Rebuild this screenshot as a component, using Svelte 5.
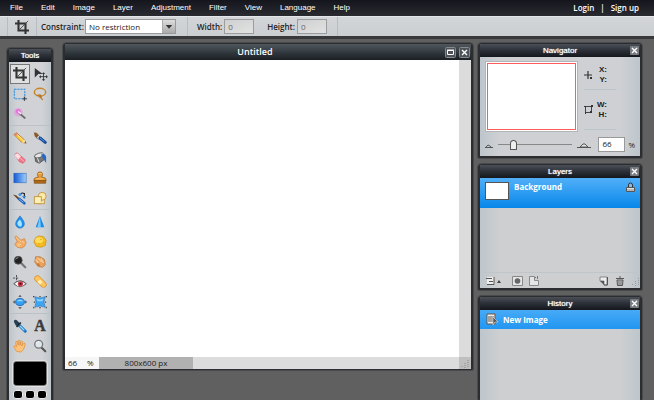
<script>
	const menus = ['File', 'Edit', 'Image', 'Layer', 'Adjustment', 'Filter', 'View', 'Language', 'Help'];

	const crop =
		'<path d="M4 0v12h12M0 4h12v12" fill="none" stroke="#333" stroke-width="2.4"/><path d="M5 11L15 1" stroke="#444"/>';
	const hand =
		'<path d="M4 14L1 9q0-2 2-1l1 1L3 4q0-2 2-1l1 4V2q1-2 2 0v5l1-4q1-2 2 0l-1 5 2-3q2-1 2 1l-2 6-3 3z" fill="#ffc27a" stroke="#d98a35" stroke-width=".8"/>';

	// null marks an empty cell
	const toolGroups = [
		[
			{ name: 'Crop', art: crop },
			{
				name: 'Move',
				art: '<path d="M2 1l9 7H6l-4 4z" fill="#333"/><path d="M12 8v7M8 11h8" stroke="#333"/><path d="M12 6l2 2h-4zM12 16l2-2h-4zM7 11l2-2v4zM17 11l-2-2v4z" fill="#333"/>'
			},
			{
				name: 'Marquee',
				art: '<rect x="1.500" y="2.500" width="12" height="11" fill="none" stroke="#2b8fe0" stroke-width="1.2" stroke-dasharray="2.500 1"/><path d="M13 11v5M11 13.500h5" stroke="#333"/>'
			},
			{
				name: 'Lasso',
				art: '<ellipse cx="8" cy="6" rx="6.500" ry="4.500" fill="none" stroke="#c98429" stroke-width="1.600"/><path d="M5 10q3-2 4 0t-2 1q3 1 4 4" fill="none" stroke="#b87324" stroke-width="1.300"/>'
			},
			{
				name: 'Wand',
				art: '<circle cx="6" cy="6" r="5" fill="#ee76e0" opacity=".4"/><circle cx="6" cy="5" r="2.800" fill="#ec62dc" opacity=".8"/><path d="M7 7l7 6" stroke="#666" stroke-width="2.200"/><path d="M6 5l3 3" stroke="#fff" stroke-width="1.500"/>'
			},
			null
		],
		[
			{
				name: 'Pencil',
				art: '<path d="M1 4l3-2 9 8 2 4-5-1z" fill="#ffc83d" stroke="#a76b16" stroke-width=".8"/><path d="M1 4l3-2 2 2-3 2z" fill="#e98379"/><path d="M10 13l3-3 2 4z" fill="#f8e0b0"/><path d="M13 13l2 1-1-2z" fill="#222"/><path d="M5 4l7 7" stroke="#fff0a5"/>'
			},
			{
				name: 'Brush',
				art: '<path d="M1 2q3-1 5 2l2 3-3 2-3-3z" fill="#8a5a2a"/><path d="M6 5l3 3-2 2-3-2z" fill="#d9d9d9" stroke="#555" stroke-width=".5"/><path d="M8 8l6 5" stroke="#174b98" stroke-width="3.500" stroke-linecap="round"/><path d="M8 8l5 4" stroke="#55a3f0"/>'
			},
			{
				name: 'Eraser',
				art: '<path d="M2 4q2-3 4-1l8 7q0 3-3 4l-4-2z" fill="#f0788b" stroke="#c95b6e" stroke-width=".7"/><path d="M2 5q1-3 4-2l3 3-3 4z" fill="#ffdce0"/><path d="M8 8l5 4" stroke="#fbb4be"/>'
			},
			{
				name: 'Paint bucket',
				art: '<path d="M2 6l8-3 4 6-7 5-4-2z" fill="#777" stroke="#333" stroke-width=".7"/><ellipse cx="7" cy="5" rx="5.500" ry="2.500" transform="rotate(-17 7 5)" fill="#e6e6e6" stroke="#444" stroke-width=".8"/><path d="M9 4q5-2 6 3v7l-3-5z" fill="#2467c6"/><path d="M5 8l2 5" stroke="#eee"/>'
			},
			{
				name: 'Gradient',
				art: '<defs><linearGradient id="blue"><stop stop-color="#1558d4"/><stop offset="1" stop-color="#9bd0fa"/></linearGradient></defs><rect x="1" y="2.500" width="14" height="11" fill="url(#blue)" stroke="#2c65b8" stroke-width=".6"/>'
			},
			{
				name: 'Clone stamp',
				art: '<path d="M6 7l-1-3q0-3 3-3t3 3l-1 3 4 1q1 1 1 3H1q0-2 1-3z" fill="#e89a30" stroke="#8e5310" stroke-width=".8"/><path d="M1.500 11h13v3h-13z" fill="#b46c19" stroke="#744009" stroke-width=".7"/><path d="M6 3l4 0M3 9h9" stroke="#ffd27e"/>'
			},
			{
				name: 'Color replace',
				art: '<path d="M0 4l4 1 4 4-2 1z" fill="#704318"/><path d="M7 9l6 5" stroke="#205fb4" stroke-width="3" stroke-linecap="round"/><path d="M7 9l5 4" stroke="#8cc5f8"/><path d="M8 5q1-4 5-2v3" fill="none" stroke="#222" stroke-width="1.300"/><path d="M10 6h5l-2 3z" fill="#287bd0"/><circle cx="8" cy="4" r="1.800" fill="#4099e8"/>'
			},
			{
				name: 'Drawing',
				art: '<circle cx="10.500" cy="6" r="4.500" fill="#ffe9a8" stroke="#bc943d"/><rect x="1.500" y="6.500" width="8" height="8" fill="#fff0b8" stroke="#bc943d"/><path d="M5 14.500h8v-4" fill="#ffe9a8" stroke="#bc943d"/>'
			}
		],
		[
			{
				name: 'Blur',
				art: '<path d="M8 1q5 6 5 9a5 5 0 0 1-10 0q0-3 5-9z" fill="#1d8fec" stroke="#1768bd" stroke-width=".6"/><path d="M8 5q3 4 2 7t-4 0 2-7z" fill="#a5e4ff"/>'
			},
			{
				name: 'Sharpen',
				art: '<path d="M8 1l5 13H3z" fill="#198be9"/><path d="M8 1l1 13H5z" fill="#74c9ff"/>'
			},
			{
				name: 'Smudge',
				art: '<path d="M2 2l2-1 5 5 4-2 2 5-2 4-3 2-5-1-3-3 1-2 2-1z" fill="#f3ac65" stroke="#c87b36" stroke-width=".7"/><path d="M3 2l6 6M5 10l4 1M5 12l3 1M10 7l3 2" stroke="#ffd5a4"/>'
			},
			{
				name: 'Sponge',
				art: '<path d="M3 3l4-2 5 1 3 4-1 6-5 2-5-1-3-5z" fill="#f5bd20" stroke="#c88b0b" stroke-width=".8"/><ellipse cx="7" cy="6" rx="4.500" ry="3.500" fill="#ffdc59"/><path d="M8 5h2M6 10h2M11 9h2" stroke="#e0a51a"/>'
			},
			{
				name: 'Dodge',
				art: '<path d="M9 9l5 5" stroke="#777" stroke-width="2.500" stroke-linecap="round"/><circle cx="6" cy="6" r="4.500" fill="#222" stroke="#555"/><path d="M3 5q1-2 3-2" fill="none" stroke="#aaa"/>'
			},
			{
				name: 'Burn',
				art: '<path d="M3 2l5 0 5 3 1 6-3 3-5-1-4-5z" fill="#e9a361" stroke="#b66e30" stroke-width=".8"/><path d="M5 3l5 5M3 5l4 5M9 4l3 5" stroke="#ffd09b" stroke-width="1.200"/><circle cx="6" cy="11" r="1.800" fill="#c87b3d"/>'
			},
			{
				name: 'Red eye',
				art: '<path d="M1 10q7-7 14 0-7 7-14 0z" fill="#fff" stroke="#555" stroke-width="1.200"/><circle cx="8.500" cy="10" r="3" fill="#cf3145"/><circle cx="8.500" cy="10" r="1.200" fill="#421018"/><path d="M4 0v7M0 3.500h7" stroke="#444" stroke-dasharray="2.500 1"/>'
			},
			{
				name: 'Spot heal',
				art: '<path d="M5 4l7 7" stroke="#d99127" stroke-width="7" stroke-linecap="round"/><path d="M5 4l7 7" stroke="#ffc45c" stroke-width="5.500" stroke-linecap="round"/><path d="M8 5l3 3-3 3-3-3z" fill="#fff0b4"/>'
			},
			{
				name: 'Bloat',
				art: '<ellipse cx="8" cy="8" rx="5" ry="4" fill="#359ff3" stroke="#1769b8"/><path d="M4 7q4-4 8 0z" fill="#90d6ff"/><path d="M8 0l2 2H6zM8 16l2-2H6zM0 8l2-2v4zM16 8l-2-2v4z" fill="#444"/>'
			},
			{
				name: 'Pinch',
				art: '<path d="M2 2q6 3 12 0-3 6 0 12-6-3-12 0 3-6 0-12z" fill="#3da5f3" stroke="#1b69b4" stroke-width=".7"/><path d="M4 4q4 2 8 0-1 2-1 3H5z" fill="#8ed5ff"/><path d="M0 1h2L0 3zM16 1v2l-2-2zM0 15v-2l2 2zM16 15h-2l2-2zM7 1h2v1H7zM7 14h2v1H7zM1 7h1v2H1zM14 7h1v2h-1z" fill="#444"/>'
			}
		],
		[
			{
				name: 'Color picker',
				art: '<path d="M1 3q0-3 3-2l3 3 2 3-2 2-4-2z" fill="#263f59"/><path d="M9 4L4 9" stroke="#222" stroke-width="1.800"/><path d="M8 8l6 6" stroke="#1778c8" stroke-width="3.500" stroke-linecap="round"/><path d="M8 8l5 5" stroke="#9adbff" stroke-width="1.500"/>'
			},
			{
				name: 'Type',
				art: '<text x="8" y="14" text-anchor="middle" font-family="Liberation Serif, serif" font-size="18" font-weight="bold" fill="#3b3b3b" stroke="#3b3b3b" stroke-width=".5">A</text>'
			},
			{ name: 'Hand', art: hand },
			{
				name: 'Zoom',
				art: '<path d="M10 10l4 4" stroke="#555" stroke-width="2.500" stroke-linecap="round"/><circle cx="6.500" cy="6" r="4.500" fill="#dce6ec" stroke="#777" stroke-width="1.500"/><path d="M4 5q1-2 3-2" fill="none" stroke="#fff"/>'
			}
		]
	];

	let activeTool = $state('Crop');
	let constraint = $state('No restriction');
	let zoom = $state(66);
	let zoomLevel = $state(18);
</script>

{#snippet closeIcon()}
	<svg viewBox="0 0 9 9" width="9" height="9">
		<rect width="9" height="9" rx="1" fill="#777b80" />
		<path d="M2 2l5 5M7 2L2 7" stroke="#fff" stroke-width="1.4" />
	</svg>
{/snippet}

{#snippet titleBar(title)}
	<header class="title-bar">
		<h2>{title}</h2>
		<button type="button" aria-label="Close {title}">{@render closeIcon()}</button>
	</header>
{/snippet}

<div class="app">
	<nav class="menu-bar">
		{#each menus as menu}
			<button type="button">{menu}</button>
		{/each}
		<div class="account">
			<a href="#login">Login</a>
			<span>|</span>
			<a href="#signup">Sign up</a>
		</div>
	</nav>

	<div class="options-bar">
		<div class="current-tool">
			<svg viewBox="0 0 16 16" width="14" height="14">{@html crop}</svg>
		</div>
		<div class="option-group constraint">
			<label for="constraint">Constraint:</label>
			<div class="select">
				<select id="constraint" bind:value={constraint}>
					<option>No restriction</option>
					<option>Aspect ratio</option>
					<option>Output size</option>
				</select>
				<svg viewBox="0 0 13 13" width="13" height="13">
					<path d="M3 5h7L6.500 9z" fill="#333" />
				</svg>
			</div>
		</div>
		<div class="option-group size">
			<label for="width">Width:</label>
			<input id="width" value="0" disabled />
			<label for="height">Height:</label>
			<input id="height" value="0" disabled />
		</div>
	</div>

	<main class="workspace">
		<section class="window tools">
			<header class="title-bar"><h2>Tools</h2></header>
			<div class="tools-body">
				{#each toolGroups as group}
					<div class="tool-group">
						{#each group as tool}
							{#if tool}
								<button
									type="button"
									class:active={activeTool === tool.name}
									aria-label={tool.name}
									onclick={() => (activeTool = tool.name)}
								>
									<svg viewBox="0 0 16 16" width="14" height="14">{@html tool.art}</svg>
								</button>
							{:else}
								<span></span>
							{/if}
						{/each}
					</div>
				{/each}
				<button type="button" class="color" aria-label="Main color"></button>
				<div class="swatches">
					<button type="button" aria-label="Black"></button>
					<button type="button" aria-label="White"></button>
					<button type="button" aria-label="Swap"></button>
				</div>
			</div>
		</section>

		<section class="window document">
			<header class="title-bar">
				<h1>Untitled</h1>
				<button type="button" aria-label="Maximize">
					<svg viewBox="0 0 11 11" width="11" height="11">
						<rect x=".5" y=".5" width="10" height="10" rx="1" fill="#4e5359" stroke="#858a8f" />
						<path d="M2.500 3.500h6v4h-6zM2 3h7" fill="none" stroke="#fff" />
					</svg>
				</button>
				<button type="button" aria-label="Close Untitled">
					<svg viewBox="0 0 11 11" width="11" height="11">
						<rect x=".5" y=".5" width="10" height="10" rx="1" fill="#4e5359" stroke="#858a8f" />
						<path d="M3 3l5 5M8 3L3 8" stroke="#fff" stroke-width="1.4" />
					</svg>
				</button>
			</header>
			<div class="canvas-area">
				<div class="canvas"></div>
				<div class="scroll-track"></div>
			</div>
			<footer class="status-bar">
				<input aria-label="Document zoom" bind:value={zoom} />
				<span class="percent">%</span>
				<span class="dimensions">800x600 px</span>
				<svg viewBox="0 0 12 12" width="12" height="12">
					<path d="M0 0h12v12H0z" fill="#bfbfbf" />
					<path d="M9 3v8M6 6v5M3 9v2" stroke="#888" stroke-dasharray="1 1" />
				</svg>
			</footer>
		</section>

		<div class="side">
			<section class="window">
				{@render titleBar('Navigator')}
				<div class="navigator-body">
					<div class="overview">
						<div class="preview"></div>
						<div class="readouts">
							<div class="readout">
								<svg viewBox="0 0 9 9" width="9" height="9">
									<path d="M4 0v8M0 4h8" stroke="#333" stroke-width="1.2" />
									<path d="M6 6h2v2H6z" fill="#333" />
								</svg>
								<div>X:<br />Y:</div>
							</div>
							<div class="readout">
								<svg viewBox="0 0 9 9" width="9" height="9">
									<path d="M1.500 1.500h6v6h-6z" fill="none" stroke="#444" />
									<path d="M0 1h2v1H0zM7 0h2v2H7zM1 7h1v2H1zM6 6h2v2H6z" fill="#333" />
								</svg>
								<div>W:<br />H:</div>
							</div>
						</div>
					</div>
					<div class="zoom-row">
						<svg viewBox="0 0 8 6" width="8" height="6">
							<path d="M0 5.500h8M1 5l2-2 2 1 1 1" fill="none" stroke="#555" />
						</svg>
						<input type="range" aria-label="Zoom level" min="0" max="100" bind:value={zoomLevel} />
						<svg viewBox="0 0 14 8" width="14" height="8">
							<path d="M0 6.500h14" stroke="#555" />
							<path d="M3 6l3-3h2l3 3z" fill="#e8e8e8" stroke="#555" />
						</svg>
						<input class="zoom-value" aria-label="Zoom" bind:value={zoom} />
						<span>%</span>
					</div>
				</div>
			</section>

			<section class="window">
				{@render titleBar('Layers')}
				<div class="layers-body">
					<button type="button" class="layer">
						<span class="thumbnail"></span>
						<span class="layer-name">Background</span>
						<svg viewBox="0 0 9 11" width="9" height="11">
							<path d="M2.500 5V3q0-2 2-2t2 2v2" fill="#8cb7df" stroke="#333" />
							<path d="M.5 5.500h8v4h-8z" fill="#e5e5e5" stroke="#555" />
							<path d="M1 8h7" stroke="#888" />
						</svg>
					</button>
					<div class="layer-actions">
						<button type="button" class="settings" aria-label="Layer settings">
							<svg viewBox="0 0 16 10" width="16" height="10">
								<path d="M1 1h7v8H1z" fill="#eee" />
								<path d="M0 2.500h6M3 5.500h4M1 8.500h7V1" fill="none" stroke="#555" />
								<path d="M11 7l2-3 2 3z" fill="#444" />
							</svg>
						</button>
						<button type="button" aria-label="Layer mask">
							<svg viewBox="0 0 11 10" width="11" height="10">
								<path d="M.5 .5h10v9H.5z" fill="#e5e5e5" stroke="#888" />
								<circle cx="5.500" cy="5" r="2.800" fill="#666" />
							</svg>
						</button>
						<button type="button" class="styles" aria-label="Layer styles">
							<svg viewBox="0 0 10 10" width="10" height="10">
								<path d="M.5 .5h5v4h4v5h-9z" fill="#e5e5e5" stroke="#888" />
								<path d="M8.500 0v4M6 1.500h4" fill="none" stroke="#777" stroke-dasharray="1 1" />
							</svg>
						</button>
						<button type="button" aria-label="New layer">
							<svg viewBox="0 0 10 10" width="10" height="10">
								<path d="M1 1h7v8H5V5H1z" fill="#eee" stroke="#888" />
								<path d="M1 5l4 4V5z" fill="#555" />
								<path d="M8.500 1v8H5" fill="none" stroke="#555" />
							</svg>
						</button>
						<button type="button" aria-label="Delete layer">
							<svg viewBox="0 0 10 10" width="10" height="10">
								<path d="M1 2.500h8M4 1h2" stroke="#555" />
								<path d="M2 4h6l-.5 5.500h-5z" fill="#bbb" stroke="#555" />
								<path d="M4 5v4M6 5v4" stroke="#777" />
							</svg>
						</button>
						<svg viewBox="0 0 9 9" width="9" height="9">
							<path d="M7.500 1v8M4.500 4v5M1.500 7v2" stroke="#999" stroke-dasharray="1 1" />
						</svg>
					</div>
				</div>
			</section>

			<section class="window history">
				{@render titleBar('History')}
				<div class="history-body">
					<button type="button" class="history-item">
						<svg viewBox="0 0 13 13" width="13" height="13">
							<path d="M1 1h8v10H1z" fill="#f4f0e8" stroke="#64554a" />
							<path d="M2 4h6M2 6h6M2 8h5" stroke="#555" />
							<path d="M7 4l5 5-3 0-2 3z" fill="#555" stroke="#ddd" stroke-width=".6" />
						</svg>
						<span>New Image</span>
					</button>
				</div>
			</section>
		</div>
	</main>
</div>

<style>
	:global(body) {
		background: #606060;
	}

	.app {
		display: flex;
		flex-direction: column;
		height: 100vh;
		overflow: hidden;
		color: #222;
		background: #606060;
		font-family: 'Open Sans', 'Noto Sans', sans-serif;
		font-size: 8px;
		line-height: 10px;
	}

	.app * {
		box-sizing: border-box;
	}

	button,
	input,
	select {
		margin: 0;
		padding: 0;
		border: 0;
		background: none;
		color: inherit;
		font: inherit;
	}

	svg {
		display: block;
		flex: none;
		overflow: visible;
	}

	h1,
	h2 {
		flex: 1;
		margin: 0;
		color: #fff;
		text-align: center;
	}

	.menu-bar {
		display: flex;
		flex: none;
		align-items: center;
		gap: 18px;
		height: 16px;
		padding: 0 15px 1px 10px;
		background: linear-gradient(#15161d, #292b31);
		color: #fff;
		font-family: 'Liberation Sans', Arial, sans-serif;
		text-shadow: 0 0 1px #fff;
	}

	.account {
		display: flex;
		gap: 6px;
		margin-left: auto;
		font-family: 'Open Sans', sans-serif;
		font-weight: 600;
		text-shadow: none;
	}

	.account a {
		color: #fff;
		text-decoration: none;
	}

	.options-bar {
		display: flex;
		flex: none;
		height: 23px;
		padding-left: 7px;
		border-top: 1px solid #e4e7e9;
		border-bottom: 3px solid #38393b;
		background: linear-gradient(#d3d5d8, #cbcfd2);
		font-weight: 600;
	}

	.current-tool {
		display: flex;
		align-items: center;
		justify-content: center;
		width: 29px;
		border-left: 1px solid #b4bdc4;
	}

	.option-group {
		display: flex;
		align-items: center;
		gap: 2px;
		border-left: 1px solid #b4bdc4;
	}

	.constraint {
		width: 151px;
		padding-left: 4px;
	}

	.constraint label {
		width: 42px;
	}

	.size {
		width: 151px;
		padding-left: 9px;
		border-right: 1px solid #b4bdc4;
	}

	.size input {
		width: 30px;
		height: 15px;
		padding-left: 3px;
		border: 1px solid #9a9c9e;
		background: linear-gradient(160deg, #cfd0d1, #e2e2e2);
		color: #666;
		font-weight: 400;
	}

	.size input:not(:last-child) {
		margin-right: 11px;
	}

	.select {
		display: flex;
		align-items: stretch;
		width: 91px;
		height: 15px;
		border: 1px solid #97999b;
		background: #fff;
	}

	.select select {
		flex: 1;
		min-width: 0;
		padding-left: 3px;
		appearance: none;
		font-weight: 400;
	}

	.select svg {
		border-left: 1px solid #aaa;
		background: linear-gradient(#ddd, #aaa);
		pointer-events: none;
	}

	.workspace {
		display: flex;
		flex: 1;
		align-items: flex-start;
		min-height: 0;
		padding: 4px 12px 0 7px;
		background: #606060;
	}

	.window {
		border: solid #2b2d31;
		border-width: 1px 2px 2px;
		border-radius: 3px 3px 1px 1px;
		outline: 1px solid #484a4c;
		background: #cdcfd2;
	}

	.title-bar {
		display: flex;
		align-items: center;
		height: 13px;
		padding: 0 1px;
		background: linear-gradient(#4b5058, #2b2f37 50%, #15171d);
	}

	.title-bar h2 {
		font-family: 'Liberation Sans', Arial, sans-serif;
		font-size: 8px;
		font-weight: 400;
		text-shadow: 0 0 1px #fff;
	}

	.side .title-bar h2 {
		padding-left: 9px;
	}

	.tools {
		flex: none;
		width: 46px;
		margin: 5px 10px 0 0;
	}

	.tools-body {
		padding: 2px 1px;
		background: linear-gradient(90deg, #bdc6cc, #d0d2d5 20%, #d0d2d5 80%, #bdc6cc);
	}

	.tool-group {
		display: grid;
		grid-template-columns: 20px 20px;
		grid-auto-rows: 20px;
	}

	.tool-group + .tool-group {
		margin-top: 1px;
		padding-top: 2px;
		border-top: 1px solid #bac2c8;
	}

	.tool-group button {
		display: flex;
		align-items: center;
		justify-content: center;
	}

	.tool-group .active {
		border: 1px solid #777;
		background: #dfe0e1;
	}

	.color {
		display: block;
		width: 34px;
		height: 25px;
		margin: 5px auto 4px;
		border: 1px solid #777;
		border-radius: 3px;
		outline: 1px solid #e3e3e3;
		background: #000;
	}

	.swatches {
		display: flex;
		justify-content: center;
		gap: 2px;
	}

	.swatches button {
		width: 10px;
		height: 9px;
		border: 1px solid #eee;
		border-radius: 3px;
		background: #000;
	}

	.document {
		display: flex;
		flex: 1;
		flex-direction: column;
		align-self: stretch;
		min-width: 0;
		margin: 0 5px 30px 0;
		border-bottom-width: 1px;
	}

	.document .title-bar {
		flex: none;
		gap: 3px;
		height: 16px;
		background: linear-gradient(#50575d, #2d343a 60%, #1b1f23);
	}

	.document h1 {
		padding-left: 2px;
		font-size: 9px;
		font-weight: 600;
		line-height: 12px;
	}

	.canvas-area {
		display: flex;
		flex: 1;
	}

	.canvas {
		flex: 1;
		background: #fff;
	}

	.scroll-track {
		width: 12px;
		background: #dcdcdc;
	}

	.status-bar {
		display: flex;
		flex: none;
		align-items: center;
		height: 12px;
		background: #dcdcdc;
	}

	.status-bar input {
		width: 22px;
		height: 12px;
		padding: 0 0 2px 3px;
		background: #f6f6f6;
	}

	.percent {
		width: 12px;
		height: 12px;
		background: #f6f6f6;
		line-height: 12px;
	}

	.dimensions {
		width: 94px;
		height: 12px;
		background: #b1b1b1;
		line-height: 12px;
		text-align: center;
	}

	.status-bar svg {
		margin-left: auto;
	}

	.side {
		display: flex;
		flex: none;
		flex-direction: column;
		gap: 6px;
		width: 164px;
		height: 100%;
	}

	.navigator-body {
		padding: 4px 5px 3px;
		background: linear-gradient(90deg, #bdc6cc, #ced0d3 12%, #ced0d3 88%, #bdc6cc);
	}

	.overview {
		display: flex;
		gap: 6px;
	}

	.preview {
		width: 93px;
		height: 71px;
		border: 1px solid #b3b6b8;
		outline: 1px solid #ff5c5c;
		outline-offset: -3px;
		background: #fff;
	}

	.readouts {
		display: grid;
		grid-template-rows: 29px 40px;
		width: 32px;
	}

	.readout {
		display: flex;
		align-items: center;
		justify-content: space-between;
		padding-right: 9px;
		border-bottom: 1px solid #bbc5cc;
		font-family: 'Liberation Sans', Arial, sans-serif;
		font-weight: 700;
		text-align: right;
	}

	.zoom-row {
		display: flex;
		align-items: center;
		gap: 5px;
		height: 21px;
		padding-top: 4px;
	}

	.zoom-row input[type='range'] {
		flex: 1;
		min-width: 0;
		height: 10px;
		appearance: none;
		background: linear-gradient(#888, #888) center / 100% 1px no-repeat;
	}

	.zoom-row input[type='range']::-webkit-slider-thumb {
		width: 7px;
		height: 10px;
		appearance: none;
		border: 1px solid #555;
		border-radius: 4px 4px 1px 1px;
		background: #eee;
	}

	.zoom-value {
		width: 27px;
		height: 15px;
		margin-left: 2px;
		padding: 0 0 2px 3px;
		border: 1px solid #999;
		background: #fff;
	}

	.zoom-row span {
		margin-left: -2px;
	}

	.layers-body {
		display: flex;
		flex-direction: column;
		height: 110px;
		background: linear-gradient(90deg, #bdc6cc, #cdcfd1 12%, #cdcfd1 88%, #bdc6cc);
	}

	.layer {
		display: flex;
		align-items: flex-start;
		gap: 5px;
		height: 30px;
		padding: 4px 5px 0 5px;
		background: linear-gradient(#52aff8, #0787ea);
		color: #fff;
		font-weight: 700;
		text-align: left;
	}

	.thumbnail {
		width: 24px;
		height: 18px;
		border: 1px solid #555;
		background: #fff;
	}

	.layer-name {
		flex: 1;
	}

	.layer-actions {
		display: flex;
		align-items: center;
		gap: 6px;
		margin-top: auto;
		padding: 3px 0 2px 6px;
		border-top: 1px solid #c0c5c9;
	}

	.settings {
		margin-right: 4px;
	}

	.styles {
		margin-right: auto;
	}

	.history {
		display: flex;
		flex: 1;
		flex-direction: column;
		border-bottom-width: 0;
	}

	.history-body {
		flex: 1;
		background: linear-gradient(90deg, #bdc6cc, #cdcfd1 12%, #cdcfd1 88%, #bdc6cc);
	}

	.history-item {
		display: flex;
		align-items: center;
		gap: 4px;
		width: 100%;
		height: 19px;
		padding-left: 6px;
		background: linear-gradient(#47aaf7, #2196f1);
		color: #fff;
		font-weight: 700;
	}
</style>
